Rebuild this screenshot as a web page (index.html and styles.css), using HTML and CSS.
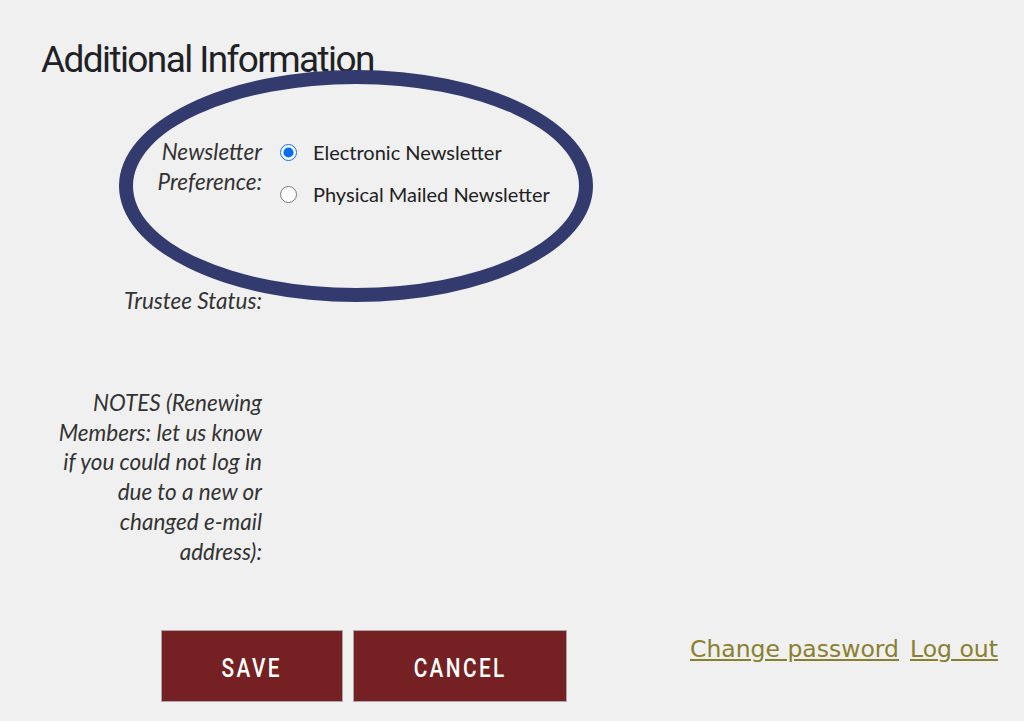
FILE: index.html
```html
<!DOCTYPE html>
<html lang="en">
<head>
  <meta charset="UTF-8">
  <title>Additional Information</title>
  <link rel="stylesheet" href="styles.css">
</head>
<body>
  <div class="page">
    <h1>Additional Information</h1>

    <div class="form">
      <div class="row row-newsletter">
        <div class="label">Newsletter<br>Preference:</div>
        <div class="value">
          <label class="radio"><input type="radio" name="newsletter" checked> Electronic Newsletter</label>
          <label class="radio"><input type="radio" name="newsletter"> Physical Mailed Newsletter</label>
        </div>
        <div class="circle"></div>
      </div>

      <div class="row row-trustee">
        <div class="label">Trustee Status:</div>
        <div class="value"></div>
      </div>

      <div class="row row-notes">
        <div class="label">NOTES (Renewing Members: let us know if you could not log in due to a new or changed e-mail address):</div>
        <div class="value"></div>
      </div>
    </div>

    <div class="actions">
      <div class="buttons">
        <button class="btn"><span>SAVE</span></button>
        <button class="btn btn-cancel"><span>CANCEL</span></button>
      </div>
      <div class="links">
        <a href="#">Change password</a>
        <a href="#">Log out</a>
      </div>
    </div>
  </div>
</body>
</html>
```

FILE: styles.css
```css
* {
  box-sizing: border-box;
  margin: 0;
  padding: 0;
}

body {
  background-color: #f0f0f0;
  font-family: 'Lato', 'Open Sans', sans-serif;
  color: #333;
}

.page {
  padding: 38px 0 0 41px;
}

h1 {
  font-family: 'Roboto', sans-serif;
  font-weight: 400;
  font-size: 37px;
  line-height: 44px;
  letter-spacing: -1.6px;
  color: #1e2226;
}

.form {
  margin-top: 11px;
}

.row {
  display: grid;
  grid-template-columns: 221px 1fr;
  column-gap: 18px;
  position: relative;
}

.label {
  padding-left: 8px;
  text-align: right;
  font-style: italic;
  font-size: 22.5px;
  line-height: 30px;
  color: #333;
}

.row-newsletter {
  padding-top: 44px;
}

.value {
  display: flex;
  flex-direction: column;
  gap: 12px;
}

.radio {
  display: flex;
  align-items: center;
  gap: 16px;
  font-size: 20px;
  line-height: 30px;
  color: #222;
}

.radio input {
  width: 17px;
  height: 17px;
  margin: 0;
  accent-color: #0a6cf0;
}

.circle {
  position: absolute;
  left: 78px;
  top: -23px;
  width: 474px;
  height: 232px;
  border: 14px solid #323a6e;
  border-radius: 50%;
  pointer-events: none;
}

.row-trustee {
  margin-top: 77px;
  height: 102px;
}

.row-notes .label {
  line-height: 29.7px;
}

.actions {
  display: flex;
  align-items: flex-start;
  margin-top: 64px;
  padding-left: 120px;
}

.buttons {
  display: flex;
  gap: 10px;
}

.btn {
  height: 72px;
  width: 182px;
  padding-top: 3px;
  background-color: #752023;
  color: #fff;
  border: 1px solid #a9a9a9;
  font-family: 'Roboto', sans-serif;
  font-weight: 500;
  font-size: 26px;
  letter-spacing: 3px;
  cursor: pointer;
}

.btn span {
  display: inline-block;
  transform: scaleX(0.8);
}

.btn-cancel {
  width: 214px;
}

.links {
  margin-left: 123px;
  margin-top: 5px;
  display: flex;
  gap: 11px;
}

.links a {
  font-family: 'DejaVu Sans', Verdana, sans-serif;
  font-size: 23.5px;
  color: #8a7f2f;
  text-decoration: underline;
}
```
